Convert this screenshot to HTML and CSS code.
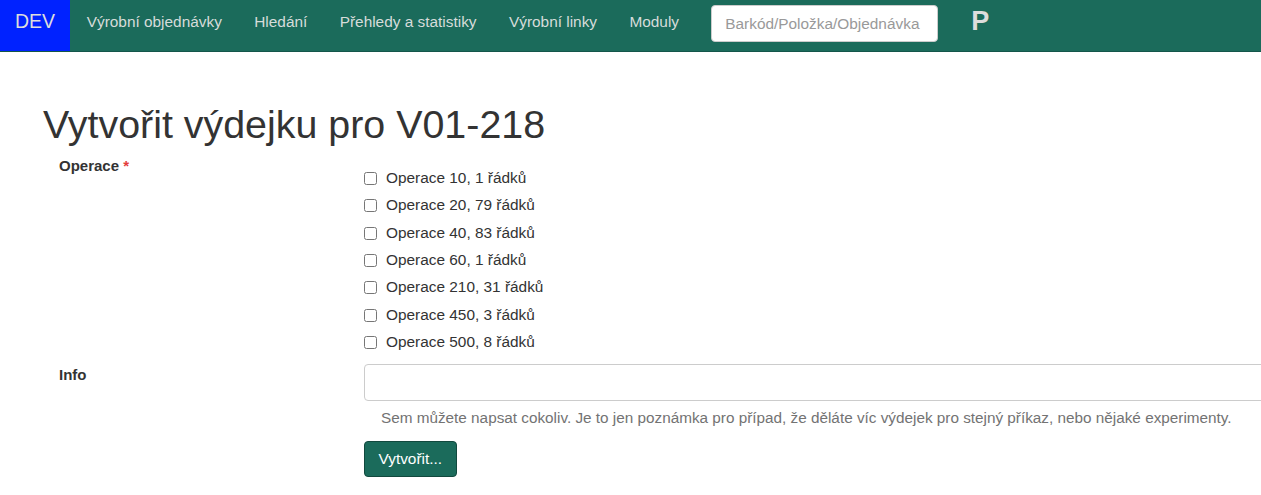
FILE: index.html
```html
<!DOCTYPE html>
<html lang="cs">
<head>
  <meta charset="UTF-8" />
  <title>Vytvořit výdejku pro V01-218</title>
  <link rel="stylesheet" href="styles.css">
</head>
<body>
  <nav class="navbar">
    <a class="brand" href="#">DEV</a>
    <ul class="nav">
      <li><a href="#">Výrobní objednávky</a></li>
      <li><a href="#">Hledání</a></li>
      <li><a href="#">Přehledy a statistiky</a></li>
      <li><a href="#">Výrobní linky</a></li>
      <li><a href="#">Moduly</a></li>
    </ul>
    <input class="search" type="text" placeholder="Barkód/Položka/Objednávka">
    <span class="user">P</span>
  </nav>

  <main class="page">
    <h1>Vytvořit výdejku pro V01-218</h1>
    <form class="form">
      <div class="row">
        <label class="control-label">Operace <span class="req">*</span></label>
        <div class="controls checks">
          <label class="check"><input type="checkbox"> Operace 10, 1 řádků</label>
          <label class="check"><input type="checkbox"> Operace 20, 79 řádků</label>
          <label class="check"><input type="checkbox"> Operace 40, 83 řádků</label>
          <label class="check"><input type="checkbox"> Operace 60, 1 řádků</label>
          <label class="check"><input type="checkbox"> Operace 210, 31 řádků</label>
          <label class="check"><input type="checkbox"> Operace 450, 3 řádků</label>
          <label class="check"><input type="checkbox"> Operace 500, 8 řádků</label>
        </div>
      </div>
      <div class="row">
        <label class="control-label">Info</label>
        <div class="controls">
          <input class="text-input" type="text">
          <p class="help">Sem můžete napsat cokoliv. Je to jen poznámka pro případ, že děláte víc výdejek pro stejný příkaz, nebo nějaké experimenty.</p>
          <button type="button" class="btn">Vytvořit...</button>
        </div>
      </div>
    </form>
  </main>
</body>
</html>
```

FILE: styles.css
```css
html, body { margin: 0; overflow: hidden; }
body { font-family: "Liberation Sans", Arial, sans-serif; font-size: 15.4px; line-height: 1.42857; color: #333; background: #fff; }

.navbar { display: flex; align-items: flex-start; height: 51px; background: #1b6b5b; border-bottom: 1px solid #14564a; }
.brand { display: block; width: 70px; height: 51px; line-height: 43px; text-align: center; font-size: 19.5px; color: #ddd; background: #0022ff; text-decoration: none; }
.nav { display: flex; list-style: none; margin: 0; padding: 0 0 0 0.5px; }
.nav a { display: block; padding: 0 16.2px; line-height: 43px; font-size: 15.4px; color: #d6dcda; text-decoration: none; }
.search { width: 227px; height: 37px; margin: 5px 0 0 16px; padding: 6px 13px; box-sizing: border-box; border: 1px solid #ccc; border-radius: 4px; font-family: inherit; font-size: 15.4px; color: #555; }
.search::placeholder { color: #999; }
.user { margin: 3px 0 0 33px; font-size: 27px; line-height: 36px; font-weight: bold; color: #ddd; }

.page { padding: 0 0 0 43px; }
h1 { margin: 51px 0 0; font-size: 39.4px; font-weight: normal; line-height: 1.1; color: #333; }

.row { display: flex; align-items: flex-start; }
.control-label { width: 321px; flex: none; padding: 9px 0 0 16px; box-sizing: border-box; font-weight: bold; font-size: 15px; }
.req { color: #e43c3c; }

.checks { display: flex; flex-direction: column; padding-top: 18px; }
.check { display: flex; align-items: center; gap: 9px; height: 27.33px; }
.check input { width: 13px; height: 13px; margin: 1px 0 0; }

.row + .row { margin-top: 8px; }
.row + .row .control-label { padding-top: 0; }
.text-input { display: block; width: 1000px; height: 37px; box-sizing: border-box; border: 1px solid #ccc; border-radius: 4px; }
.help { margin: 6px 0 0 17px; color: #737373; font-size: 15.3px; line-height: 22px; }
.btn { margin-top: 12px; height: 36px; padding: 0 13.5px; background: #1b6b5b; border: 1px solid #12493e; border-radius: 4px; color: #fff; font-family: inherit; font-size: 15.4px; }
```
